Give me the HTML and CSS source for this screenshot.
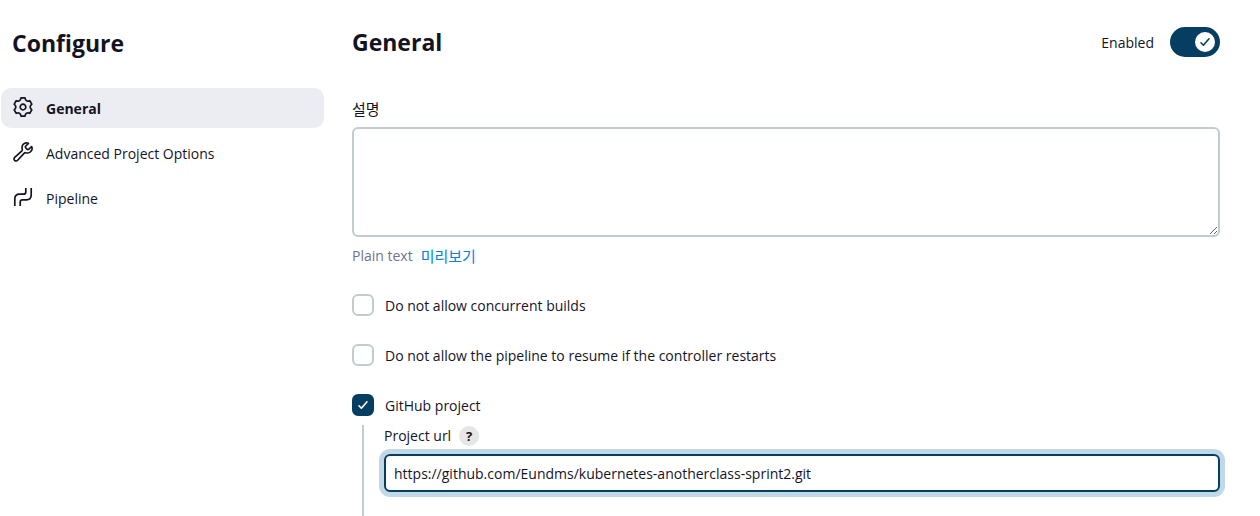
FILE: index.html
```html
<!DOCTYPE html>
<html lang="ko">
<head>
<meta charset="utf-8">
<meta name="viewport" content="width=device-width, initial-scale=1">
<title>Configure</title>
<link rel="stylesheet" href="styles.css">
</head>
<body>
<div class="page">
  <aside class="sidebar">
    <h1 class="title">Configure</h1>
    <nav class="tasks">
      <a class="task task-active" href="#general">
        <svg class="task-icon" viewBox="-10 -10 20 20" aria-hidden="true"><circle r="2.8"/><path d="M-2-9.100H2C2.400-6.200 4.200-5.200 6.800-6.300L8.800-2.900C6.600-1 6.600 1 8.800 2.900L6.800 6.300C4.200 5.200 2.400 6.200 2 9.100H-2C-2.400 6.200-4.200 5.200-6.800 6.300L-8.800 2.900C-6.600 1-6.600-1-8.800-2.900L-6.800-6.300C-4.200-5.200-2.400-6.200-2-9.100Z"/></svg>
        <span class="task-text">General</span>
      </a>
      <a class="task" href="#advanced">
        <svg class="task-icon" viewBox="25 25 462 462" aria-hidden="true"><path class="wrench" d="M393.87 190a32.1 32.1 0 01-45.25 0l-26.57-26.57a32.09 32.09 0 010-45.26L382.19 58a1 1 0 00-.3-1.64c-38.82-16.64-89.15-8.16-121.11 23.57-30.58 30.35-32.32 76-21.12 115.84a31.93 31.93 0 01-9.06 32.08L64 380a48.17 48.17 0 1068 68l153.86-167a31.93 31.93 0 0131.6-9.13c39.54 10.59 84.54 8.6 114.72-21.19 32.49-32 39.5-88.56 23.75-120.93a1 1 0 00-1.6-.26z"/></svg>
        <span class="task-text">Advanced Project Options</span>
      </a>
      <a class="task" href="#pipeline">
        <svg class="task-icon" viewBox="0 0 20 20" aria-hidden="true"><path d="M1.800 19V12Q1.800 7.200 6.600 7.200H10.500Q12.800 7.200 12.800 4.900V1M7.200 19V15Q7.200 12.800 9.400 12.800H13.400Q18.200 12.800 18.200 8V1"/></svg>
        <span class="task-text">Pipeline</span>
      </a>
    </nav>
  </aside>

  <main class="main">
    <form class="form">
      <header class="section-head">
        <h2 class="title" id="general">General</h2>
        <label class="toggle">
          <span class="option-text">Enabled</span>
          <input class="toggle-input" type="checkbox" role="switch" checked>
          <span class="toggle-track"><span class="toggle-knob"><svg class="toggle-check" viewBox="0 0 12 12" aria-hidden="true"><path d="M2 6.8L4.400 9.200L10 2.800"/></svg></span></span>
        </label>
      </header>

      <div class="description">
        <label class="label" for="description">설명</label>
        <textarea class="textarea" id="description"></textarea>
        <div class="preview"><span>Plain text</span><a class="link" href="#preview">미리보기</a></div>
      </div>

      <label class="option">
        <input class="check-input" type="checkbox">
        <span class="check-box"></span>
        <span class="option-text">Do not allow concurrent builds</span>
      </label>
      <label class="option">
        <input class="check-input" type="checkbox">
        <span class="check-box"></span>
        <span class="option-text">Do not allow the pipeline to resume if the controller restarts</span>
      </label>
      <label class="option">
        <input class="check-input" type="checkbox" checked>
        <span class="check-box"><svg class="check-mark" viewBox="0 0 12 12" aria-hidden="true"><path d="M2 6.8L4.400 9.200L10 2.800"/></svg></span>
        <span class="option-text">GitHub project</span>
      </label>

      <div class="nested">
        <div class="nested-head">
          <label for="project-url">Project url</label>
          <button class="help" type="button" aria-label="Help for Project url">?</button>
        </div>
        <input class="text-input" id="project-url" type="text" value="https://github.com/Eundms/kubernetes-anotherclass-sprint2.git">
      </div>
    </form>
  </main>
</div>
</body>
</html>
```
FILE: styles.css
```css
:root {
  --text: #14141f;
  --muted: #73738c;
  --border: #c0cccf;
  --primary: #063e61;
  --focus: #c1d9e7;
}

* {
  box-sizing: border-box;
}

body {
  margin: 0;
  background: #fff;
  color: var(--text);
  font-family: "Open Sans", "Noto Sans CJK KR", sans-serif;
  font-size: 14px;
  line-height: 20px;
}

.page {
  display: grid;
  grid-template-columns: 323px minmax(0, 1fr);
  gap: 28px;
  padding: 27px 40px 0 1px;
}

.title {
  margin: 0;
  font-size: 23px;
  font-weight: 700;
  line-height: 32px;
}

.sidebar .title {
  padding-left: 11px;
}

.tasks {
  display: flex;
  flex-direction: column;
  gap: 5px;
  margin-top: 29px;
}

.task {
  display: flex;
  align-items: center;
  gap: 13px;
  height: 40px;
  padding: 0 12px;
  border-radius: 10px;
  color: var(--text);
  text-decoration: none;
}

.task-active {
  background: #ecedf3;
  font-weight: 700;
}

.task-text,
.option-text {
  padding-top: 2px;
}

.task-icon {
  width: 20px;
  height: 20px;
  margin-bottom: 2px;
  fill: none;
  stroke: currentColor;
  stroke-width: 1.7;
  stroke-linecap: butt;
  stroke-linejoin: round;
}

.wrench {
  stroke-width: 38;
}

.section-head {
  display: flex;
  align-items: center;
  justify-content: space-between;
}

.section-head .title {
  line-height: 30px;
}

.toggle {
  display: flex;
  align-items: center;
  gap: 16px;
}

.toggle-input,
.check-input {
  position: absolute;
  opacity: 0;
}

.toggle-track {
  display: flex;
  align-items: center;
  justify-content: flex-end;
  width: 50px;
  height: 30px;
  padding: 5px;
  border-radius: 15px;
  background: var(--primary);
}

.toggle-knob {
  display: grid;
  place-items: center;
  width: 20px;
  height: 20px;
  border-radius: 50%;
  background: #fff;
}

.toggle-check,
.check-mark {
  width: 12px;
  height: 12px;
  fill: none;
  stroke: var(--primary);
  stroke-width: 1.6;
  stroke-linecap: round;
  stroke-linejoin: round;
}

.check-mark {
  stroke: #fff;
}

.description {
  display: flex;
  flex-direction: column;
  margin: 42px 0 28px;
}

.label {
  margin-bottom: 8px;
  font-size: 15px;
}

.textarea {
  display: block;
  width: 100%;
  height: 110px;
  padding: 8px;
  border: 2px solid var(--border);
  border-radius: 6px;
  background: #fff;
  color: var(--text);
  font: inherit;
  resize: vertical;
}

.preview {
  display: flex;
  gap: 8px;
  height: 20px;
  margin-top: 9px;
  color: var(--muted);
}

.link {
  color: #0082e6;
  font-size: 15px;
  text-decoration: none;
}

.option {
  display: flex;
  align-items: center;
  gap: 11px;
  width: fit-content;
  margin-bottom: 28px;
}

.check-box {
  display: grid;
  place-items: center;
  width: 22px;
  height: 22px;
  border: 2px solid var(--border);
  border-radius: 6px;
}

.check-input:checked + .check-box {
  border-color: var(--primary);
  background: var(--primary);
}

.option:has(:checked) {
  margin-bottom: 9px;
}

.nested {
  margin-left: 10px;
  padding: 1px 0 24px 20px;
  border-left: 2px solid var(--border);
}

.nested-head {
  display: flex;
  align-items: center;
  gap: 8px;
  margin-bottom: 8px;
}

.help {
  width: 20px;
  height: 20px;
  padding: 0;
  border: 0;
  border-radius: 50%;
  background: #e6e6e6;
  color: var(--text);
  font: inherit;
  font-size: 13px;
  font-weight: 700;
  line-height: 20px;
}

.text-input {
  display: block;
  width: 100%;
  height: 38px;
  padding: 0 8px;
  border: 2px solid var(--primary);
  border-radius: 6px;
  outline: 0;
  background: #fff;
  box-shadow: 0 0 0 5px var(--focus);
  color: var(--text);
  font: inherit;
}
```
